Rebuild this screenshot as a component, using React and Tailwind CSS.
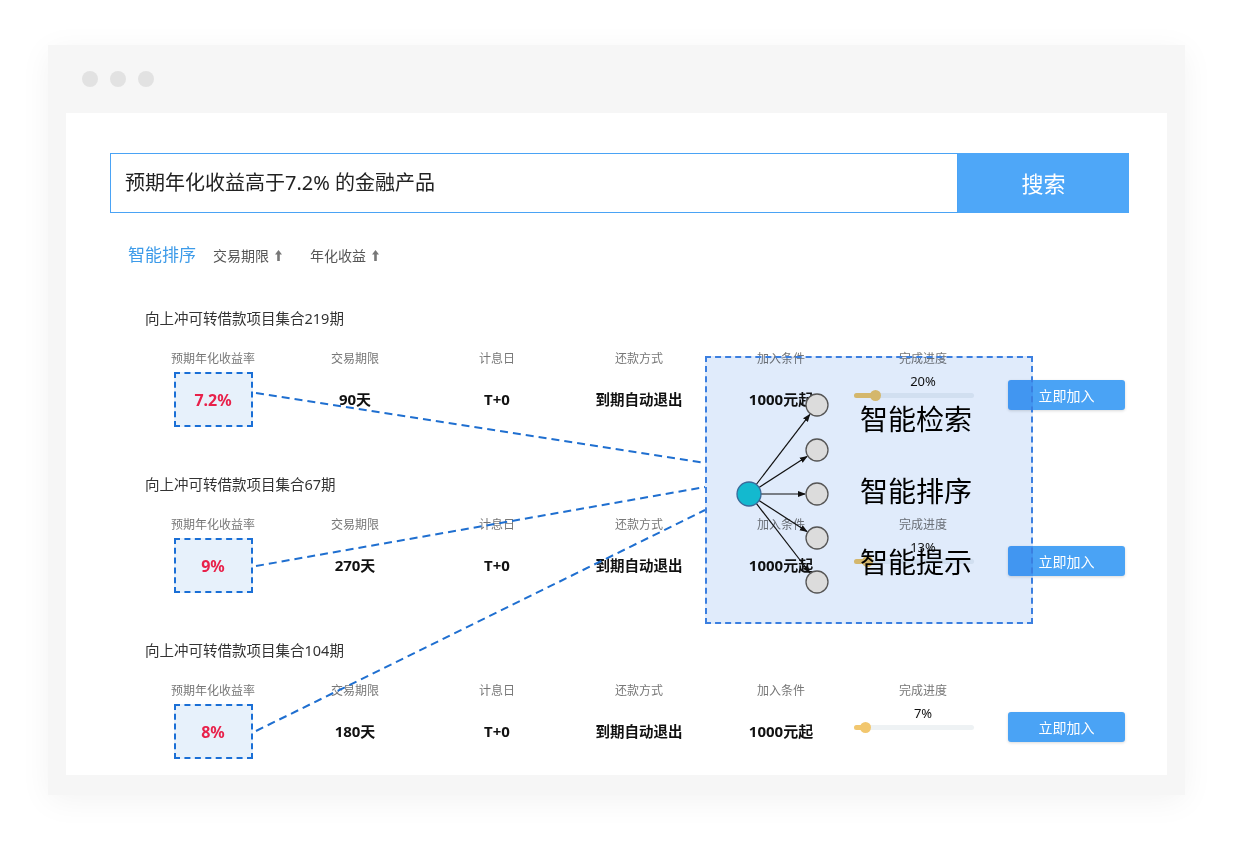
import React from 'react';

const font = { fontFamily: '"Noto Sans", "Noto Sans CJK SC", sans-serif' };

const rows = [
    { title: '向上冲可转借款项目集合219期', rate: '7.2%', term: '90天', progress: 20 },
    { title: '向上冲可转借款项目集合67期', rate: '9%', term: '270天', progress: 13 },
    { title: '向上冲可转借款项目集合104期', rate: '8%', term: '180天', progress: 7 },
];

const labels = ['预期年化收益率', '交易期限', '计息日', '还款方式', '加入条件', '完成进度'];

const UpArrow = () => (
    <svg width="7" height="11" viewBox="0 0 7 11" className="ml-[6px]">
        <path d="M3.5 0 L7 4.5 L4.8 4.5 L4.8 11 L2.2 11 L2.2 4.5 L0 4.5 Z" fill="#777" />
    </svg>
);

const Row = ({ row }) => (
    <div className="mb-[47px]">
        <div className="ml-[79px] h-[20px] leading-[20px] text-[14.5px] text-[#333]">{row.title}</div>
        <div className="ml-[76px] mt-[21px] flex">
            <div className="grid grid-cols-6 w-[852px]">
                {labels.map((l) => (
                    <div key={l} className="h-[20px] leading-[20px] text-center text-[12px] text-[#777]">{l}</div>
                ))}
                <div className="mt-[3px] h-[55px] flex items-center justify-center">
                    <div className="w-[79px] h-[55px] border-2 border-dashed border-[#1a6fd6] bg-[#e7f1fb] flex items-center justify-center text-[16px] font-bold text-[#e8214a]">
                        {row.rate}
                    </div>
                </div>
                <div className="mt-[3px] h-[55px] flex items-center justify-center text-[15px] font-bold text-[#111]">{row.term}</div>
                <div className="mt-[3px] h-[55px] flex items-center justify-center text-[15px] font-bold text-[#111]">T+0</div>
                <div className="mt-[3px] h-[55px] flex items-center justify-center text-[14.5px] font-bold text-[#111]">到期自动退出</div>
                <div className="mt-[3px] h-[55px] flex items-center justify-center text-[15px] font-bold text-[#111]">1000元起</div>
                <div className="mt-[3px] h-[55px] flex flex-col items-center">
                    <div className="mt-[1px] h-[16px] leading-[16px] text-[13px] text-[#111]">{row.progress}%</div>
                    <div className="mt-[4px] ml-[-18px] relative w-[120px] h-[5px] rounded-full bg-[#eef2f4]">
                        <div
                            className="absolute left-0 top-0 h-[5px] rounded-full bg-[#f2c76e]"
                            style={{ width: `${Math.max(row.progress, 12)}%` }}
                        />
                        <div
                            className="absolute top-[-3px] w-[11px] h-[11px] rounded-full bg-[#f2c76e]"
                            style={{ left: `calc(${Math.max(row.progress, 12)}% - 8px)` }}
                        />
                    </div>
                </div>
            </div>
            <div className="ml-[14px] mt-[31px]">
                <button className="w-[117px] h-[30px] rounded-[3px] bg-[#4aa3f5] text-white text-[14px] shadow-[0_1px_3px_rgba(0,0,0,0.15)]">
                    立即加入
                </button>
            </div>
        </div>
    </div>
);

const nodes = [49, 94, 138, 182, 226];

const Diagram = () => {
    const cx = 44;
    const cy = 138;
    return (
        <svg width="200" height="268" className="absolute left-0 top-0">
            <defs>
                <marker id="ah" markerWidth="8" markerHeight="8" refX="7" refY="4" orient="auto" markerUnits="userSpaceOnUse">
                    <path d="M0 1 L8 4 L0 7 Z" fill="#111" />
                </marker>
            </defs>
            {nodes.map((y) => {
                const dx = 112 - cx;
                const dy = y - cy;
                const len = Math.sqrt(dx * dx + dy * dy);
                const ux = dx / len;
                const uy = dy / len;
                return (
                    <line
                        key={'l' + y}
                        x1={cx + ux * 11}
                        y1={cy + uy * 11}
                        x2={112 - ux * 12}
                        y2={y - uy * 12}
                        stroke="#111"
                        strokeWidth="1.2"
                        markerEnd="url(#ah)"
                    />
                );
            })}
            {nodes.map((y) => (
                <circle key={'c' + y} cx="112" cy={y} r="11" fill="#dcdcdc" stroke="#555" strokeWidth="1.3" />
            ))}
            <circle cx={cx} cy={cy} r="12" fill="#13b9cf" stroke="#3a6a9a" strokeWidth="1.3" />
        </svg>
    );
};

export default function App() {
    return (
        <div className="relative w-[1233px] h-[845px] bg-white overflow-hidden" style={font}>
            <div className="pt-[45px] pl-[48px]">
                {/* window frame */}
                <div className="w-[1137px] h-[750px] bg-[#f6f6f6] shadow-[0_6px_30px_rgba(0,0,0,0.05)]">
                    <div className="h-[68px] flex items-center pl-[34px] gap-[12px]">
                        <span className="w-[16px] h-[16px] rounded-full bg-[#e2e2e2]" />
                        <span className="w-[16px] h-[16px] rounded-full bg-[#e2e2e2]" />
                        <span className="w-[16px] h-[16px] rounded-full bg-[#e2e2e2]" />
                    </div>
                    <div className="mx-[18px] h-[662px] bg-white overflow-hidden">
                        {/* search */}
                        <div className="ml-[44px] mt-[40px] w-[1019px] h-[60px] flex">
                            <div className="flex-1 border border-[#4aa3f5] flex items-center pl-[14px] text-[20px] text-[#222]">
                                预期年化收益高于7.2% 的金融产品
                            </div>
                            <button className="w-[171px] h-[60px] bg-[#4ea7f8] text-white text-[22px]">搜索</button>
                        </div>
                        {/* sort */}
                        <div className="ml-[62px] mt-[30px] h-[24px] flex items-center">
                            <span className="text-[17px] text-[#3d9be9]">智能排序</span>
                            <span className="ml-[17px] flex items-center text-[14px] text-[#555]">
                                交易期限
                                <UpArrow />
                            </span>
                            <span className="ml-[28px] flex items-center text-[14px] text-[#555]">
                                年化收益
                                <UpArrow />
                            </span>
                        </div>
                        <div className="mt-[41px]">
                            {rows.map((r) => (
                                <Row key={r.title} row={r} />
                            ))}
                        </div>
                    </div>
                </div>
            </div>

            {/* dashed connectors */}
            <svg width="1233" height="845" className="absolute left-0 top-0 pointer-events-none">
                <g stroke="#1f6fd0" strokeWidth="2" strokeDasharray="8 5" fill="none">
                    <line x1="256" y1="393" x2="705" y2="463" />
                    <line x1="256" y1="566" x2="705" y2="487" />
                    <line x1="256" y1="731" x2="705" y2="510" />
                </g>
            </svg>

            {/* overlay panel */}
            <div className="absolute left-[705px] top-[356px] w-[328px] h-[268px]">
                <div className="absolute inset-0 bg-[#e0ebfb] mix-blend-multiply" />
                <div className="absolute inset-0 border-2 border-dashed border-[#3b7fe0]" />
                <Diagram />
                <div className="absolute left-[155px] top-0 flex flex-col text-[28px] leading-[36px] text-black" style={{ fontFamily: '"Noto Sans CJK SC", sans-serif' }}>
                    <span className="mt-[44px]">智能检索</span>
                    <span className="mt-[36px]">智能排序</span>
                    <span className="mt-[35px]">智能提示</span>
                </div>
            </div>
        </div>
    );
}
